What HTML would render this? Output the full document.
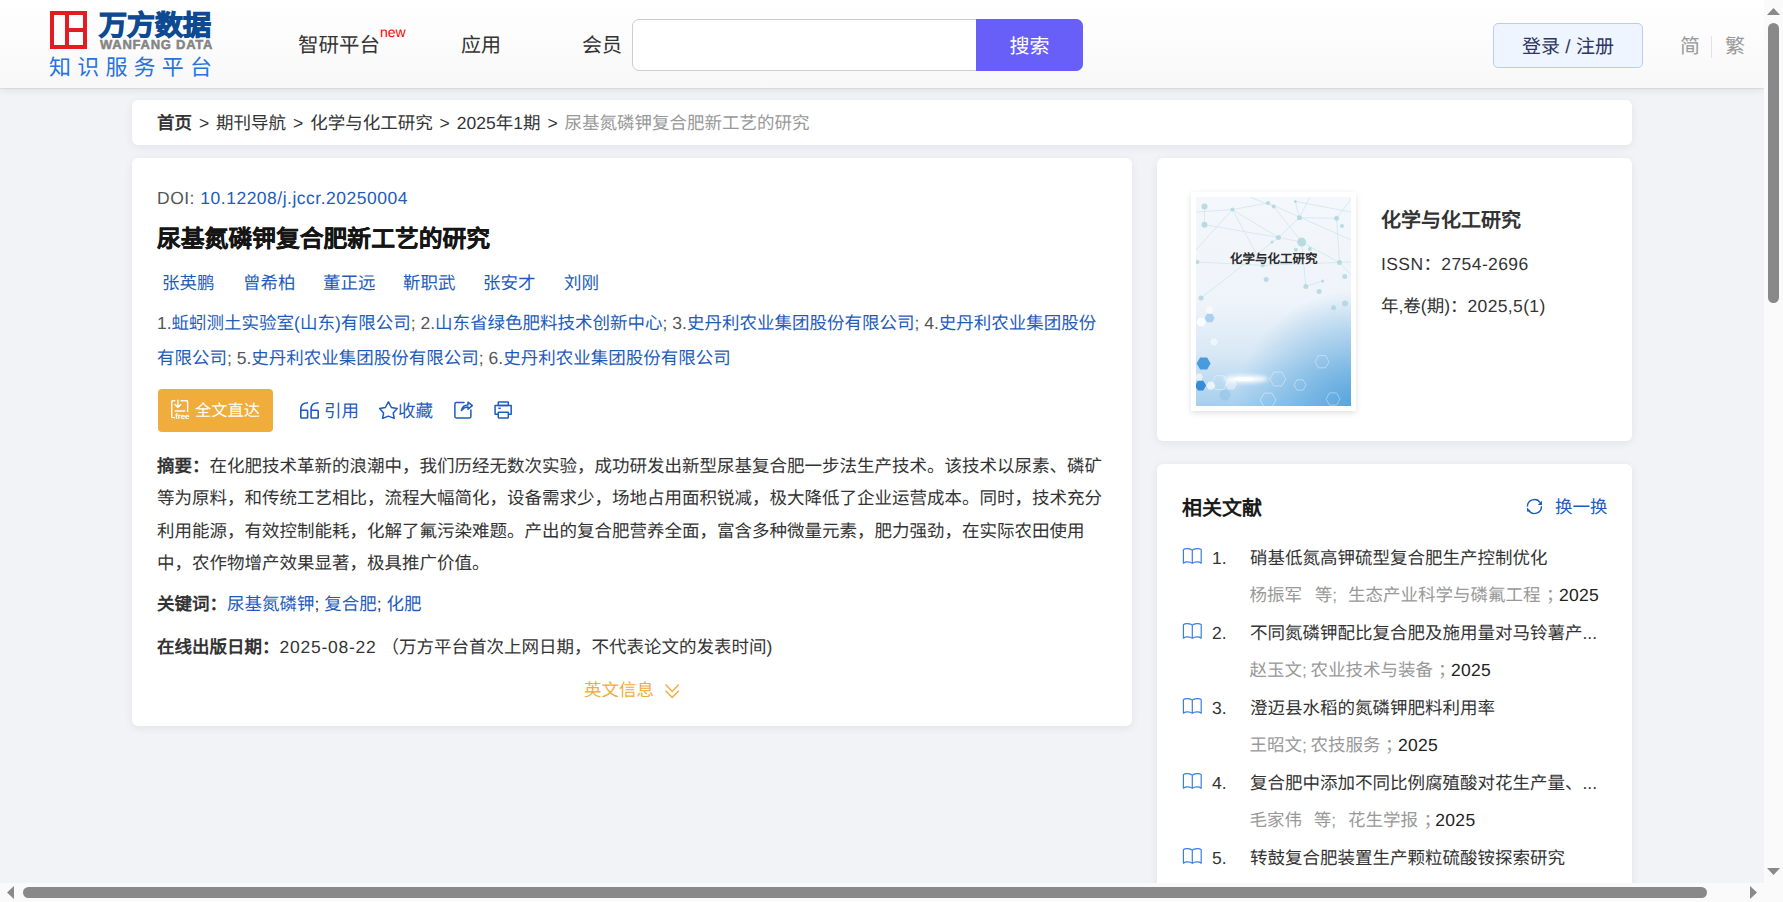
<!DOCTYPE html>
<html lang="zh-CN">
<head>
<meta charset="utf-8">
<style>
*{margin:0;padding:0;box-sizing:border-box}
html,body{width:1783px;height:902px;overflow:hidden}
body{text-rendering:geometricPrecision;background:#f1f3f7;font-family:"Liberation Sans",sans-serif;color:#333;position:relative}
.a{position:absolute;white-space:nowrap}
#hdr{position:absolute;left:0;top:0;width:1764px;height:88px;background:linear-gradient(#ffffff,#f8f8f8);box-shadow:0 1px 1px rgba(0,0,0,.06),0 2px 8px rgba(0,0,0,.08)}
.card{position:absolute;background:#fff;border-radius:6px;box-shadow:0 2px 10px rgba(20,30,60,.07)}
.blue{color:#1e5cbc}
.gray{color:#999}
.t18{font-size:17.5px;line-height:26px}
.sep{display:inline-block;width:24.1px;text-align:center}
svg{position:absolute;overflow:visible}
</style>
</head>
<body>
<div id="hdr">
  <div class="a" style="left:50px;top:11px;width:37px;height:38px;border:4px solid #e31b23"></div>
  <div class="a" style="left:65px;top:11px;width:4px;height:38px;background:#e31b23"></div>
  <div class="a" style="left:67px;top:28px;width:20px;height:4px;background:#e31b23"></div>
  <div class="a" style="left:99px;top:8px;font-size:28px;line-height:36px;font-weight:900;color:#0d4a91;-webkit-text-stroke:1.1px #0d4a91">万方数据</div>
  <div class="a" style="left:100px;top:38px;font-size:13px;line-height:14px;font-weight:bold;color:#858585;letter-spacing:0.75px;-webkit-text-stroke:0.5px #858585">WANFANG DATA</div>
  <div class="a" style="left:49px;top:54px;font-size:22px;line-height:28px;color:#2a72dc;letter-spacing:6.2px">知识服务平台</div>
  <div class="a" style="left:298px;top:33px;font-size:20.5px;line-height:26px;color:#333">智研平台</div>
  <div class="a" style="left:380px;top:24px;font-size:14px;line-height:16px;color:#f00">new</div>
  <div class="a" style="left:461px;top:33px;font-size:20px;line-height:26px;color:#333">应用</div>
  <div class="a" style="left:582px;top:33px;font-size:20px;line-height:26px;color:#333">会员</div>
  <div class="a" style="left:632px;top:19px;width:451px;height:52px;border:1px solid #cdcdcd;border-radius:7px;background:#fff"></div>
  <div class="a" style="left:976px;top:19px;width:107px;height:52px;border-radius:0 7px 7px 0;background:#675ff8;color:#fff;font-size:20px;line-height:56px;text-align:center">搜索</div>
  <div class="a" style="left:1493px;top:23px;width:150px;height:45px;border:1px solid #b9cdee;border-radius:5px;background:#eef5fe;color:#2d3561;font-size:19px;line-height:48px;text-align:center">登录 / 注册</div>
  <div class="a" style="left:1680px;top:34px;font-size:20px;line-height:26px;color:#999">简</div>
  <div class="a" style="left:1711px;top:36px;width:1px;height:22px;background:#e2e2e2"></div>
  <div class="a" style="left:1725px;top:34px;font-size:20px;line-height:26px;color:#999">繁</div>
</div>

<div class="card" style="left:132px;top:100px;width:1500px;height:45px"></div>
<div class="a t18" style="left:157px;top:110px;color:#333"><b>首页</b><i class="sep" style="font-style:normal">&gt;</i>期刊导航<i class="sep" style="font-style:normal">&gt;</i>化学与化工研究<i class="sep" style="font-style:normal">&gt;</i>2025年1期<i class="sep" style="font-style:normal">&gt;</i><span class="gray">尿基氮磷钾复合肥新工艺的研究</span></div>

<div class="card" style="left:132px;top:158px;width:1000px;height:568px"></div>
<div class="card" style="left:1157px;top:158px;width:475px;height:283px"></div>
<div class="card" style="left:1157px;top:464px;width:475px;height:460px"></div>

<div class="a t18" style="left:157px;top:185px;color:#555;letter-spacing:0.5px">DOI: <span class="blue">10.12208/j.jccr.20250004</span></div>
<div class="a" style="left:157px;top:224px;font-size:23.8px;line-height:32px;font-weight:bold;color:#151515;-webkit-text-stroke:0.25px #151515">尿基氮磷钾复合肥新工艺的研究</div>
<div class="a t18 blue" style="left:162px;top:270px">张英鹏</div>
<div class="a t18 blue" style="left:243px;top:270px">曾希柏</div>
<div class="a t18 blue" style="left:323px;top:270px">董正远</div>
<div class="a t18 blue" style="left:403px;top:270px">靳职武</div>
<div class="a t18 blue" style="left:483px;top:270px">张安才</div>
<div class="a t18 blue" style="left:564px;top:270px">刘刚</div>
<div class="a t18" style="left:157px;top:310px;color:#555">1.<span class="blue">蚯蚓测土实验室(山东)有限公司</span>; 2.<span class="blue">山东省绿色肥料技术创新中心</span>; 3.<span class="blue">史丹利农业集团股份有限公司</span>; 4.<span class="blue">史丹利农业集团股份</span></div>
<div class="a t18" style="left:157px;top:345px;color:#555"><span class="blue">有限公司</span>; 5.<span class="blue">史丹利农业集团股份有限公司</span>; 6.<span class="blue">史丹利农业集团股份有限公司</span></div>

<div class="a" style="left:158px;top:389px;width:115px;height:43px;background:#f0ad3b;border-radius:4px"></div>
<svg style="left:0;top:0" width="1" height="1" viewBox="0 0 1 1">
 <g fill="none" stroke="#fff" stroke-width="1.4" stroke-linecap="round" stroke-linejoin="round">
  <path d="M174.8,400.8 H172.6 Q171.7,400.8 171.7,401.7 V416.8 Q171.7,417.6 172.6,417.6 H174.5"/>
  <path d="M181.1,400.8 H186.7 Q187.6,400.8 187.6,401.7 V411.5"/>
  <path d="M177.9,400.3 V407.6 M175,404.6 L177.9,407.6 L180.8,404.6"/>
  <path d="M175.2,411 H184.6"/>
 </g>
 <text x="175.3" y="418.8" font-family="Liberation Sans" font-size="8" font-weight="bold" fill="#fff" letter-spacing="-0.2">free</text>
</svg>
<div class="a" style="left:195px;top:399px;font-size:16.25px;line-height:24px;color:#fff">全文直达</div>

<svg style="left:0;top:0" width="1" height="1" viewBox="0 0 1 1">
 <g fill="none" stroke="#1e5cbc" stroke-width="1.6" stroke-linejoin="round">
  <path d="M308,402.8 C304,402.8 300.8,404.6 300.8,409 V417.2 Q300.8,418 301.6,418 H306.8 Q307.6,418 307.6,417.2 V411.1 Q307.6,410.3 306.8,410.3 H300.8"/>
  <path d="M318.6,402.8 C314.6,402.8 311.1,404.6 311.1,409 V417.2 Q311.1,418 311.9,418 H317.4 Q318.2,418 318.2,417.2 V411.1 Q318.2,410.3 317.4,410.3 H311.1"/>
 </g>
 <path fill="none" stroke="#1e5cbc" stroke-width="1.5" stroke-linejoin="round" d="M388.4,401.8 L391.4,407.5 L397.2,408.6 L393.2,412.9 L394.2,418.4 L388.4,416.1 L382.6,418.4 L383.6,412.9 L379.6,408.6 L385.4,407.5 Z"/>
 <g fill="none" stroke="#1e5cbc" stroke-width="1.5" stroke-linejoin="round" stroke-linecap="round">
  <path d="M464,402.6 H456.2 Q454.9,402.6 454.9,403.9 V416.6 Q454.9,417.9 456.2,417.9 H469.6 Q470.9,417.9 470.9,416.6 V410"/>
  <path d="M461.4,410.4 C462.2,406.6 464.6,404.8 468,404.9 V402.2 L472.3,405.6 L468,409.2 V406.9 C465.4,406.8 463.4,408 461.4,410.4 Z"/>
 </g>
 <g fill="none" stroke="#1e5cbc" stroke-width="1.5" stroke-linejoin="round">
  <rect x="498.3" y="402" width="10" height="3.6" rx="0.4"/>
  <path d="M498.3,414.2 H495.1 V405.6 H511.2 V414.2 H508.3"/>
  <rect x="498.3" y="412.2" width="10" height="5.8" rx="0.4"/>
  <path d="M498.3,408.3 H500.8"/>
 </g>
</svg>
<div class="a t18 blue" style="left:324px;top:398px">引用</div>
<div class="a t18 blue" style="left:398px;top:398px">收藏</div>

<div class="a t18" style="left:157px;top:453px">
<div style="height:32.4px"><b>摘要：</b>在化肥技术革新的浪潮中，我们历经无数次实验，成功研发出新型尿基复合肥一步法生产技术。该技术以尿素、磷矿</div>
<div style="height:32.4px">等为原料，和传统工艺相比，流程大幅简化，设备需求少，场地占用面积锐减，极大降低了企业运营成本。同时，技术充分</div>
<div style="height:32.4px">利用能源，有效控制能耗，化解了氟污染难题。产出的复合肥营养全面，富含多种微量元素，肥力强劲，在实际农田使用</div>
<div style="height:32.4px">中，农作物增产效果显著，极具推广价值。</div>
</div>
<div class="a t18" style="left:157px;top:591px"><b>关键词：</b><span class="blue">尿基氮磷钾</span>; <span class="blue">复合肥</span>; <span class="blue">化肥</span></div>
<div class="a t18" style="left:157px;top:634px"><b>在线出版日期：</b><span style="letter-spacing:0.75px">2025-08-22</span> （万方平台首次上网日期，不代表论文的发表时间)</div>
<div class="a t18" style="left:584px;top:677px;color:#f0ad3b">英文信息</div>
<svg style="left:0;top:0" width="1" height="1" viewBox="0 0 1 1">
 <path fill="none" stroke="#f0ad3b" stroke-width="1.4" d="M665.6,684.6 L672.2,691.4 L678.8,684.6 M665.6,690.8 L672.2,697.6 L678.8,690.8"/>
</svg>

<div class="a" style="left:1191px;top:192px;width:165px;height:219px;background:#fff;box-shadow:0 2px 6px rgba(0,0,0,.12)"></div>
<svg style="left:0;top:0" width="1" height="1" viewBox="0 0 1 1"><defs><linearGradient id="cg" gradientUnits="userSpaceOnUse" x1="0" y1="197" x2="0" y2="406"><stop offset="0" stop-color="#f4f7fb"/><stop offset="0.5" stop-color="#eff4fa"/><stop offset="0.75" stop-color="#d8e8f5"/><stop offset="1" stop-color="#a5cfee"/></linearGradient><radialGradient id="cg2" gradientUnits="userSpaceOnUse" cx="1356" cy="410" r="120"><stop offset="0" stop-color="#4a9edb" stop-opacity="0.9"/><stop offset="0.5" stop-color="#4a9edb" stop-opacity="0.45"/><stop offset="1" stop-color="#4a9edb" stop-opacity="0"/></radialGradient><filter id="bl" x="-50%" y="-50%" width="200%" height="200%"><feGaussianBlur stdDeviation="2"/></filter><clipPath id="cc"><rect x="1196" y="197" width="155" height="209"/></clipPath></defs><g clip-path="url(#cc)"><rect x="1196" y="197" width="155" height="209" fill="url(#cg)"/><rect x="1196" y="197" width="155" height="209" fill="url(#cg2)"/><g stroke="#b2d8df" stroke-width="0.7" opacity="0.6"><line x1="1196" y1="212" x2="1232.4" y2="209.6"/><line x1="1232.4" y1="209.6" x2="1278.4" y2="237.5"/><line x1="1232.4" y1="209.6" x2="1268" y2="203"/><line x1="1204.5" y1="206.6" x2="1204.5" y2="224.7"/><line x1="1273.7" y1="206.6" x2="1301.7" y2="242.1"/><line x1="1295.3" y1="201.4" x2="1299.4" y2="217.7"/><line x1="1299.4" y1="217.7" x2="1336.6" y2="218.3"/><line x1="1299.4" y1="217.7" x2="1278.4" y2="237.5"/><line x1="1278.4" y1="237.5" x2="1301.7" y2="242.1"/><line x1="1301.7" y1="242.1" x2="1339.5" y2="262.5"/><line x1="1204.5" y1="224.7" x2="1278.4" y2="237.5"/><line x1="1197.5" y1="262" x2="1262.7" y2="265.4"/><line x1="1232.4" y1="209.6" x2="1262.7" y2="265.4"/><line x1="1278.4" y1="237.5" x2="1201" y2="298"/><line x1="1305.8" y1="286.4" x2="1322.6" y2="281.1"/><line x1="1301.7" y1="242.1" x2="1305.8" y2="286.4"/><line x1="1336.6" y1="218.3" x2="1351" y2="199"/><line x1="1268" y1="203" x2="1351" y2="240"/><line x1="1299.4" y1="217.7" x2="1310" y2="197"/><line x1="1250" y1="197" x2="1273.7" y2="206.6"/><line x1="1336.6" y1="218.3" x2="1339.5" y2="262.5"/><line x1="1339.5" y1="262.5" x2="1351" y2="275"/><line x1="1196" y1="250" x2="1232.4" y2="209.6"/><line x1="1295.3" y1="201.4" x2="1351" y2="212"/><line x1="1262.7" y1="265.4" x2="1351" y2="262"/></g><g fill="#a9d3dc" opacity="0.75"><circle cx="1204.5" cy="206.6" r="3"/><circle cx="1204.5" cy="224.7" r="3"/><circle cx="1232.4" cy="209.6" r="2"/><circle cx="1268" cy="203" r="2"/><circle cx="1273.7" cy="206.6" r="2"/><circle cx="1295.3" cy="201.4" r="1.5"/><circle cx="1299.4" cy="217.7" r="2.5"/><circle cx="1336.6" cy="218.3" r="2.5"/><circle cx="1278.4" cy="237.5" r="2.5"/><circle cx="1301.7" cy="242.1" r="4.5"/><circle cx="1272" cy="242" r="1.5"/><circle cx="1309.8" cy="249" r="2"/><circle cx="1295.9" cy="249.7" r="2"/><circle cx="1262.7" cy="265.4" r="2"/><circle cx="1266.2" cy="279.4" r="2.5"/><circle cx="1305.8" cy="286.4" r="2.5"/><circle cx="1322.6" cy="281.1" r="1.5"/><circle cx="1319.1" cy="291.6" r="2.5"/><circle cx="1344.8" cy="276.5" r="2.5"/><circle cx="1339.5" cy="262.5" r="2.5"/><circle cx="1197.5" cy="262" r="2"/><circle cx="1201" cy="298" r="2.5"/><circle cx="1345" cy="303.6" r="3"/><circle cx="1333.5" cy="307.8" r="2.5"/><circle cx="1342" cy="226" r="2"/></g><path d="M1210.6,363.5 L1207.1,369.6 L1200.1,369.6 L1196.6,363.5 L1200.1,357.4 L1207.1,357.4 Z" fill="#3a94d8" opacity="0.9"/><path d="M1206.1,385.6 L1203.3,390.4 L1197.8,390.4 L1195.1,385.6 L1197.8,380.8 L1203.3,380.8 Z" fill="#2784d3" opacity="0.9"/><path d="M1215.3,385.6 L1213.0,389.5 L1208.5,389.5 L1206.3,385.6 L1208.5,381.7 L1213.0,381.7 Z" fill="#ffffff" opacity="0.7"/><path d="M1206.2,322.0 L1203.7,326.3 L1198.7,326.3 L1196.2,322.0 L1198.7,317.7 L1203.7,317.7 Z" fill="#ffffff" opacity="0.8"/><path d="M1214.6,318.0 L1212.1,322.3 L1207.1,322.3 L1204.6,318.0 L1207.1,313.7 L1212.1,313.7 Z" fill="#9cc8ec" opacity="0.8"/><path d="M1213.6,310.0 L1211.6,313.5 L1207.6,313.5 L1205.6,310.0 L1207.6,306.5 L1211.6,306.5 Z" fill="#ffffff" opacity="0.6"/><path d="M1237.0,384.4 L1234.0,389.6 L1228.0,389.6 L1225.0,384.4 L1228.0,379.2 L1234.0,379.2 Z" fill="#ffffff" opacity="0.45"/><path d="M1203.0,377.0 L1201.0,380.5 L1197.0,380.5 L1195.0,377.0 L1197.0,373.5 L1201.0,373.5 Z" fill="#ffffff" opacity="0.6"/><path d="M1231.0,395.0 L1228.0,400.2 L1222.0,400.2 L1219.0,395.0 L1222.0,389.8 L1228.0,389.8 Z" fill="#8cc0e6" opacity="0.5"/><path d="M1218.0,342.0 L1216.0,345.5 L1212.0,345.5 L1210.0,342.0 L1212.0,338.5 L1216.0,338.5 Z" fill="#ffffff" opacity="0.5"/><g fill="none" stroke="#ffffff" stroke-width="0.7" opacity="0.55"><path d="M1227.7,382.6 L1223.7,389.5 L1215.7,389.5 L1211.7,382.6 L1215.7,375.7 L1223.7,375.7 Z"/><path d="M1285.8,379.0 L1281.8,385.9 L1273.8,385.9 L1269.8,379.0 L1273.8,372.1 L1281.8,372.1 Z"/><path d="M1329.0,361.7 L1325.5,367.8 L1318.5,367.8 L1315.0,361.7 L1318.5,355.6 L1325.5,355.6 Z"/><path d="M1340.0,399.0 L1336.5,405.1 L1329.5,405.1 L1326.0,399.0 L1329.5,392.9 L1336.5,392.9 Z"/><path d="M1276.0,400.0 L1272.0,406.9 L1264.0,406.9 L1260.0,400.0 L1264.0,393.1 L1272.0,393.1 Z"/><path d="M1306.0,385.0 L1303.0,390.2 L1297.0,390.2 L1294.0,385.0 L1297.0,379.8 L1303.0,379.8 Z"/></g><ellipse cx="1246" cy="379" rx="22" ry="3.5" fill="#fff" filter="url(#bl)"/><ellipse cx="1244" cy="379" rx="10" ry="2" fill="#fff"/></g></svg>
<div class="a" style="left:1230px;top:250px;font-size:12.5px;line-height:18px;font-weight:bold;color:#2a2a2a">化学与化工研究</div>
<div class="a" style="left:1381px;top:207px;font-size:20px;line-height:28px;font-weight:bold;color:#333">化学与化工研究</div>
<div class="a t18" style="left:1381px;top:251px;letter-spacing:0.4px">ISSN：2754-2696</div>
<div class="a t18" style="left:1381px;top:293px"><span>年,卷(期)：</span><span style="letter-spacing:0.35px">2025,5(1)</span></div>

<div class="a" style="left:1182px;top:495px;font-size:20px;line-height:28px;font-weight:bold;color:#1a1a1a">相关文献</div>
<svg style="left:0;top:0" width="1" height="1" viewBox="0 0 1 1">
 <g fill="none" stroke="#1e5cbc" stroke-width="1.4">
  <path d="M1527.4,506.6 A7,7 0 0 1 1540.2,502.6"/>
  <path d="M1541.4,506.2 A7,7 0 0 1 1528.6,510.4"/>
 </g>
 <path fill="#1e5cbc" d="M1542,500.8 L1542,505 L1537.8,505 Z M1527,511.6 L1527,507.6 L1531,511.6 Z"/>
</svg>
<div class="a t18 blue" style="left:1555px;top:494px">换一换</div>
<svg style="left:0;top:0" width="1" height="1" viewBox="0 0 1 1"><path fill="none" stroke="#3a7fe3" stroke-width="1.2" stroke-linejoin="round" d="M1192.3,550.2 C1190.5,548.2 1185,548 1183.4,549.6 V563.2 C1185.5,561.4 1190,561.6 1192.3,563.4 C1194.6,561.6 1199.1,561.4 1201.2,563.2 V549.6 C1199.6,548 1194.1,548.2 1192.3,550.2 V563.4"/></svg>
<div class="a t18" style="left:1212px;top:545px;color:#333">1.</div>
<div class="a t18" style="left:1250px;top:545px;color:#333">硝基低氮高钾硫型复合肥生产控制优化</div>
<div class="a t18 gray" style="left:1249.5px;top:582px">杨振军</div>
<div class="a t18 gray" style="left:1314.7px;top:582px">等;</div>
<div class="a t18 gray" style="left:1348px;top:582px">生态产业科学与磷氟工程</div>
<div class="a t18 gray" style="left:1546px;top:582px">；</div>
<div class="a t18" style="left:1559px;top:582px;color:#222;letter-spacing:0.3px">2025</div>
<svg style="left:0;top:0" width="1" height="1" viewBox="0 0 1 1"><path fill="none" stroke="#3a7fe3" stroke-width="1.2" stroke-linejoin="round" d="M1192.3,625.2 C1190.5,623.2 1185,623 1183.4,624.6 V638.2 C1185.5,636.4 1190,636.6 1192.3,638.4 C1194.6,636.6 1199.1,636.4 1201.2,638.2 V624.6 C1199.6,623 1194.1,623.2 1192.3,625.2 V638.4"/></svg>
<div class="a t18" style="left:1212px;top:620px;color:#333">2.</div>
<div class="a t18" style="left:1250px;top:620px;color:#333">不同氮磷钾配比复合肥及施用量对马铃薯产...</div>
<div class="a t18 gray" style="left:1249.5px;top:657px">赵玉文;</div>
<div class="a t18 gray" style="left:1310.6px;top:657px">农业技术与装备</div>
<div class="a t18 gray" style="left:1438px;top:657px">；</div>
<div class="a t18" style="left:1451px;top:657px;color:#222;letter-spacing:0.3px">2025</div>
<svg style="left:0;top:0" width="1" height="1" viewBox="0 0 1 1"><path fill="none" stroke="#3a7fe3" stroke-width="1.2" stroke-linejoin="round" d="M1192.3,700.2 C1190.5,698.2 1185,698 1183.4,699.6 V713.2 C1185.5,711.4 1190,711.6 1192.3,713.4 C1194.6,711.6 1199.1,711.4 1201.2,713.2 V699.6 C1199.6,698 1194.1,698.2 1192.3,700.2 V713.4"/></svg>
<div class="a t18" style="left:1212px;top:695px;color:#333">3.</div>
<div class="a t18" style="left:1250px;top:695px;color:#333">澄迈县水稻的氮磷钾肥料利用率</div>
<div class="a t18 gray" style="left:1249.5px;top:732px">王昭文;</div>
<div class="a t18 gray" style="left:1310.6px;top:732px">农技服务</div>
<div class="a t18 gray" style="left:1385px;top:732px">；</div>
<div class="a t18" style="left:1398px;top:732px;color:#222;letter-spacing:0.3px">2025</div>
<svg style="left:0;top:0" width="1" height="1" viewBox="0 0 1 1"><path fill="none" stroke="#3a7fe3" stroke-width="1.2" stroke-linejoin="round" d="M1192.3,775.2 C1190.5,773.2 1185,773 1183.4,774.6 V788.2 C1185.5,786.4 1190,786.6 1192.3,788.4 C1194.6,786.6 1199.1,786.4 1201.2,788.2 V774.6 C1199.6,773 1194.1,773.2 1192.3,775.2 V788.4"/></svg>
<div class="a t18" style="left:1212px;top:770px;color:#333">4.</div>
<div class="a t18" style="left:1250px;top:770px;color:#333">复合肥中添加不同比例腐殖酸对花生产量、...</div>
<div class="a t18 gray" style="left:1249.5px;top:807px">毛家伟</div>
<div class="a t18 gray" style="left:1313.7px;top:807px">等;</div>
<div class="a t18 gray" style="left:1348px;top:807px">花生学报</div>
<div class="a t18 gray" style="left:1423.6px;top:807px">；</div>
<div class="a t18" style="left:1435.3px;top:807px;color:#222;letter-spacing:0.3px">2025</div>
<svg style="left:0;top:0" width="1" height="1" viewBox="0 0 1 1"><path fill="none" stroke="#3a7fe3" stroke-width="1.2" stroke-linejoin="round" d="M1192.3,850.2 C1190.5,848.2 1185,848 1183.4,849.6 V863.2 C1185.5,861.4 1190,861.6 1192.3,863.4 C1194.6,861.6 1199.1,861.4 1201.2,863.2 V849.6 C1199.6,848 1194.1,848.2 1192.3,850.2 V863.4"/></svg>
<div class="a t18" style="left:1212px;top:845px;color:#333">5.</div>
<div class="a t18" style="left:1250px;top:845px;color:#333">转鼓复合肥装置生产颗粒硫酸铵探索研究</div>

<div class="a" style="left:1764px;top:0;width:19px;height:902px;background:#fafafa"></div>
<div class="a" style="left:0;top:883px;width:1783px;height:19px;background:#fafafa"></div>
<svg style="left:0;top:0" width="1" height="1" viewBox="0 0 1 1">
 <path fill="#898989" d="M1767,15 L1773.5,8 L1780,15 Z M1767,868 L1773.5,875 L1780,868 Z M14,886 L7,892.5 L14,899 Z M1750,886 L1757,892.5 L1750,899 Z"/>
 <rect x="1768" y="23" width="11" height="280" rx="5.5" fill="#898989"/>
 <rect x="23" y="887" width="1684" height="11" rx="5.5" fill="#898989"/>
</svg>
</body>
</html>
